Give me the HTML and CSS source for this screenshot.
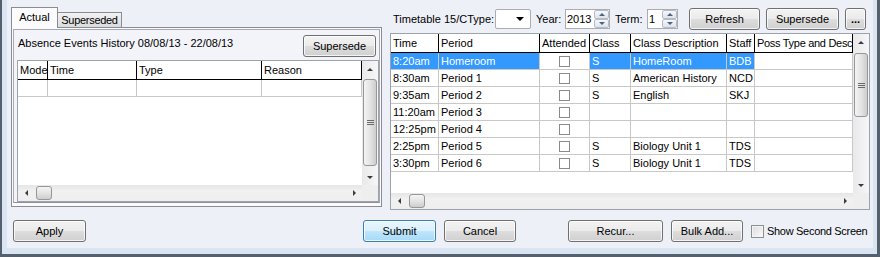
FILE: index.html
```html
<!DOCTYPE html>
<html lang="en">
<head>
    <meta charset="UTF-8">
    <title>Attendance Events</title>
    <link rel="stylesheet" href="styles.css">
</head>
<body>
    <div class="window">
        <div class="client">
            <div class="main">
                <!-- Left: absence history tabs -->
                <div class="tab-control">
                    <div class="tab-strip">
                        <div class="tab tab-active">Actual</div>
                        <div class="tab">Superseded</div>
                    </div>
                    <div class="tab-page">
                        <div class="group">
                            <div class="group-head">
                                <span class="caption">Absence Events History 08/08/13 - 22/08/13</span>
                                <button class="btn btn-small">Supersede</button>
                            </div>
                            <div class="grid grid-absence">
                                <div class="grid-body">
                                    <div class="row head">
                                        <div class="cell">Mode</div>
                                        <div class="cell">Time</div>
                                        <div class="cell">Type</div>
                                        <div class="cell">Reason</div>
                                    </div>
                                    <div class="row">
                                        <div class="cell"></div>
                                        <div class="cell"></div>
                                        <div class="cell"></div>
                                        <div class="cell"></div>
                                    </div>
                                </div>
                                <div class="vscroll">
                                    <div class="sb-arrow"><span class="tri tri-up"></span></div>
                                    <div class="vthumb thumb-absence"><span class="grip"></span></div>
                                    <div class="sb-fill"></div>
                                    <div class="sb-arrow"><span class="tri tri-down"></span></div>
                                </div>
                                <div class="hscroll">
                                    <div class="sb-arrow"><span class="tri tri-left"></span></div>
                                    <div class="hthumb"></div>
                                    <div class="sb-fill"></div>
                                    <div class="sb-arrow"><span class="tri tri-right"></span></div>
                                </div>
                                <div class="corner"></div>
                            </div>
                        </div>
                    </div>
                </div>

                <!-- Right: timetable periods -->
                <div class="timetable">
                    <div class="toolbar">
                        <span class="lbl lbl-timetable">Timetable 15/CType:</span>
                        <div class="combo"><span class="tri tri-down tri-black"></span></div>
                        <span class="lbl lbl-year">Year:</span>
                        <div class="spin spin-year">
                            <span class="spin-text">2013</span>
                            <div class="spin-btns">
                                <div class="spin-btn"><span class="tri tri-up tri-blue"></span></div>
                                <div class="spin-btn"><span class="tri tri-down tri-blue"></span></div>
                            </div>
                        </div>
                        <span class="lbl lbl-term">Term:</span>
                        <div class="spin spin-term">
                            <span class="spin-text">1</span>
                            <div class="spin-btns">
                                <div class="spin-btn"><span class="tri tri-up tri-blue"></span></div>
                                <div class="spin-btn"><span class="tri tri-down tri-blue"></span></div>
                            </div>
                        </div>
                        <button class="btn btn-refresh">Refresh</button>
                        <button class="btn btn-supersede">Supersede</button>
                        <button class="btn btn-more">...</button>
                    </div>

                    <div class="grid grid-periods">
                        <div class="grid-body">
                            <div class="row head">
                                <div class="cell">Time</div>
                                <div class="cell">Period</div>
                                <div class="cell">Attended</div>
                                <div class="cell">Class</div>
                                <div class="cell">Class Description</div>
                                <div class="cell">Staff</div>
                                <div class="cell tight">Poss Type and Desc</div>
                            </div>
                            <div class="row selected">
                                <div class="cell hl">8:20am</div>
                                <div class="cell hl">Homeroom</div>
                                <div class="cell check"><span class="box"></span></div>
                                <div class="cell hl">S</div>
                                <div class="cell hl">HomeRoom</div>
                                <div class="cell hl">BDB</div>
                                <div class="cell"></div>
                            </div>
                            <div class="row">
                                <div class="cell">8:30am</div>
                                <div class="cell">Period 1</div>
                                <div class="cell check"><span class="box"></span></div>
                                <div class="cell">S</div>
                                <div class="cell">American History</div>
                                <div class="cell">NCD</div>
                                <div class="cell"></div>
                            </div>
                            <div class="row">
                                <div class="cell">9:35am</div>
                                <div class="cell">Period 2</div>
                                <div class="cell check"><span class="box"></span></div>
                                <div class="cell">S</div>
                                <div class="cell">English</div>
                                <div class="cell">SKJ</div>
                                <div class="cell"></div>
                            </div>
                            <div class="row">
                                <div class="cell">11:20am</div>
                                <div class="cell">Period 3</div>
                                <div class="cell check"><span class="box"></span></div>
                                <div class="cell"></div>
                                <div class="cell"></div>
                                <div class="cell"></div>
                                <div class="cell"></div>
                            </div>
                            <div class="row">
                                <div class="cell">12:25pm</div>
                                <div class="cell">Period 4</div>
                                <div class="cell check"><span class="box"></span></div>
                                <div class="cell"></div>
                                <div class="cell"></div>
                                <div class="cell"></div>
                                <div class="cell"></div>
                            </div>
                            <div class="row">
                                <div class="cell">2:25pm</div>
                                <div class="cell">Period 5</div>
                                <div class="cell check"><span class="box"></span></div>
                                <div class="cell">S</div>
                                <div class="cell">Biology Unit 1</div>
                                <div class="cell">TDS</div>
                                <div class="cell"></div>
                            </div>
                            <div class="row">
                                <div class="cell">3:30pm</div>
                                <div class="cell">Period 6</div>
                                <div class="cell check"><span class="box"></span></div>
                                <div class="cell">S</div>
                                <div class="cell">Biology Unit 1</div>
                                <div class="cell">TDS</div>
                                <div class="cell"></div>
                            </div>
                        </div>
                        <div class="vscroll">
                            <div class="sb-arrow"><span class="tri tri-up"></span></div>
                            <div class="vthumb thumb-periods"><span class="grip"></span></div>
                            <div class="sb-fill"></div>
                            <div class="sb-arrow"><span class="tri tri-down"></span></div>
                        </div>
                        <div class="hscroll">
                            <div class="sb-arrow"><span class="tri tri-left"></span></div>
                            <div class="hthumb"></div>
                            <div class="sb-fill"></div>
                            <div class="sb-arrow"><span class="tri tri-right"></span></div>
                        </div>
                        <div class="corner"></div>
                    </div>
                </div>
            </div>

            <!-- Bottom buttons -->
            <div class="footer">
                <button class="btn btn-apply">Apply</button>
                <button class="btn btn-default btn-submit">Submit</button>
                <button class="btn btn-cancel">Cancel</button>
                <button class="btn btn-recur">Recur...</button>
                <button class="btn btn-bulk">Bulk Add...</button>
                <span class="checkbox"></span>
                <span class="check-label">Show Second Screen</span>
            </div>
        </div>
    </div>
</body>
</html>
```

FILE: styles.css
```css
/* General page */
body {
    margin: 0;
    padding: 0;
    font-family: "Liberation Sans", Arial, sans-serif;
    font-size: 11px;
    color: #000;
    background: #fff;
}

/* Window frame */
.window {
    width: 880px;
    height: 257px;
    box-sizing: border-box;
    border-left: 2px solid #565f6c;
    border-right: 3px solid #565f6c;
    border-bottom: 3px solid #565f6c;
    padding: 0 4px 6px 5px;
    background: #d9e5f3;
}

.client {
    height: 248px;
    background: #eef0f8;
    display: flex;
    flex-direction: column;
}

.main {
    display: flex;
    gap: 8px;
    padding: 7px 3px 0 4px;
}

/* Tabs */
.tab-control {
    width: 371px;
    display: flex;
    flex-direction: column;
}

.tab-strip {
    display: flex;
    align-items: flex-end;
    height: 20px;
}

.tab {
    box-sizing: border-box;
    height: 15px;
    width: 65px;
    margin-left: -1px;
    border: 1px solid #898c95;
    border-bottom: none;
    background: linear-gradient(#f2f2f2, #dcdcdc);
    text-align: center;
    line-height: 14px;
    letter-spacing: -0.3px;
}

.tab-active {
    position: relative;
    z-index: 1;
    height: 21px;
    width: 47px;
    margin-left: 0;
    margin-bottom: -1px;
    background: #fbfbfd;
    line-height: 19px;
    letter-spacing: 0;
}

.tab-page {
    box-sizing: border-box;
    height: 180px;
    border: 1px solid #898c95;
    background: #fbfbfd;
    padding: 1px 1px 3px 1px;
}

.group {
    box-sizing: border-box;
    height: 100%;
    border: 1px solid #a7a9b0;
    border-bottom-color: #8f9198;
    background: #f3f4fa;
    padding: 0 1px 0 3px;
    display: flex;
    flex-direction: column;
}

.group-head {
    height: 30px;
    display: flex;
    justify-content: space-between;
    align-items: flex-start;
}

.caption {
    padding-left: 1px;
    margin-top: 7px;
}

.btn-small {
    margin-top: 5px;
    margin-right: 2px;
    width: 73px;
}

/* Buttons */
.btn {
    box-sizing: border-box;
    height: 22px;
    padding: 0;
    font-family: inherit;
    font-size: 11px;
    color: #000;
    border: 1px solid #707070;
    border-radius: 3px;
    background: linear-gradient(#f3f3f3 0%, #ebebeb 48%, #dddddd 52%, #d0d0d0 100%);
    box-shadow: inset 0 0 0 1px rgba(255, 255, 255, 0.75);
}

.btn-default {
    border-color: #3c7fb1;
    background: linear-gradient(#eaf6fd 0%, #d9f0fc 48%, #bee6fd 52%, #a7d9f5 100%);
}

/* Grids */
.grid {
    box-sizing: border-box;
    border: 1px solid #9da3ad;
    background: #fff;
    display: grid;
    grid-template-columns: 1fr 16px;
    grid-template-rows: 1fr 16px;
    overflow: hidden;
}

.grid-absence {
    height: 142px;
    width: 362px;
}

.grid-periods {
    height: 177px;
    width: 480px;
}

.grid-body {
    overflow: hidden;
    background: #fff;
}

.row {
    display: grid;
    height: 17px;
    line-height: 16px;
}

.grid-absence .row {
    grid-template-columns: 30px 89px 125px 100px;
}

.grid-periods .row {
    grid-template-columns: 48px 101px 50px 41px 96px 28px 98px;
}

.cell {
    box-sizing: border-box;
    border-right: 1px solid #c8c8c8;
    border-bottom: 1px solid #c8c8c8;
    padding-left: 2px;
    white-space: nowrap;
    overflow: hidden;
}

.row.head {
    height: 19px;
    line-height: 18px;
}

.head .cell {
    border-right-color: #000;
    border-bottom-color: #000;
}

.cell.tight {
    letter-spacing: -0.3px;
}

.cell.hl {
    background: #3399ff;
    color: #fff;
}

.check {
    display: flex;
    align-items: center;
    justify-content: center;
    padding: 0;
}

.box {
    box-sizing: border-box;
    width: 11px;
    height: 11px;
    border: 1px solid #8a8a8a;
    background: #fff;
}

/* Scrollbars */
.vscroll {
    display: flex;
    flex-direction: column;
    background: linear-gradient(to right, #e9e9ec, #f6f6f8);
}

.hscroll {
    display: flex;
    align-items: stretch;
    background: linear-gradient(#e6e6e6, #f1f1f1 40%, #eeeeee);
}

.corner {
    background: #eeeeee;
}

.sb-arrow {
    flex: none;
    width: 16px;
    height: 16px;
    display: flex;
    align-items: center;
    justify-content: center;
}

.sb-fill {
    flex: 1;
}

.vthumb {
    box-sizing: border-box;
    margin: 2px 1px 0;
    border: 1px solid #979797;
    border-radius: 3px;
    background: linear-gradient(to right, #f4f4f4, #e4e4e4 50%, #cdcdcd);
    display: flex;
    align-items: center;
    justify-content: center;
}

.thumb-absence {
    height: 87px;
}

.thumb-periods {
    height: 64px;
    margin-top: 3px;
}

.grip {
    width: 7px;
    height: 5px;
    background: repeating-linear-gradient(#6b6b6b 0 1px, transparent 1px 2px);
}

.hthumb {
    box-sizing: border-box;
    width: 16px;
    margin: 1px 0 1px 2px;
    border: 1px solid #979797;
    border-radius: 3px;
    background: linear-gradient(#f4f4f4, #e4e4e4 50%, #cdcdcd);
}

.tri {
    width: 0;
    height: 0;
}

.tri-up {
    border-left: 3px solid transparent;
    border-right: 3px solid transparent;
    border-bottom: 3px solid #3b3b3b;
}

.tri-down {
    border-left: 3px solid transparent;
    border-right: 3px solid transparent;
    border-top: 3px solid #3b3b3b;
}

.tri-left {
    border-top: 3px solid transparent;
    border-bottom: 3px solid transparent;
    border-right: 3px solid #3b3b3b;
}

.tri-right {
    border-top: 3px solid transparent;
    border-bottom: 3px solid transparent;
    border-left: 3px solid #3b3b3b;
}

.tri-black {
    border-left-width: 4px;
    border-right-width: 4px;
    border-top: 4px solid #000;
}

.tri-blue.tri-up {
    border-bottom-color: #4d6185;
}

.tri-blue.tri-down {
    border-top-color: #4d6185;
}

/* Timetable toolbar */
.timetable {
    display: flex;
    flex-direction: column;
}

.toolbar {
    display: flex;
    align-items: center;
    height: 24px;
    margin-bottom: 2px;
}

.lbl {
    box-sizing: border-box;
    white-space: nowrap;
    overflow: hidden;
}

.lbl-timetable {
    width: 102px;
    margin-left: 3px;
}

.lbl-year {
    width: 29px;
    margin-left: 5px;
}

.lbl-term {
    width: 32px;
    margin-left: 5px;
}

.combo {
    box-sizing: border-box;
    width: 36px;
    height: 20px;
    border: 1px solid #abadb3;
    border-radius: 2px;
    background: #fff;
    display: flex;
    align-items: center;
    justify-content: flex-end;
    padding-right: 6px;
}

.spin {
    box-sizing: border-box;
    height: 20px;
    display: flex;
    border: 1px solid #abadb3;
    background: #fff;
}

.spin-year {
    width: 45px;
}

.spin-term {
    width: 31px;
}

.spin-text {
    flex: 1;
    line-height: 18px;
    padding-left: 1px;
}

.spin-btns {
    width: 15px;
    display: flex;
    flex-direction: column;
}

.spin-btn {
    flex: 1;
    box-sizing: border-box;
    border: 1px solid #b5bcc7;
    border-radius: 2px;
    background: linear-gradient(#f6f8fa, #dde3ea);
    display: flex;
    align-items: center;
    justify-content: center;
}

.btn-refresh {
    width: 71px;
    margin-left: 11px;
}

.btn-supersede {
    width: 73px;
    margin-left: 6px;
}

.btn-more {
    width: 21px;
    margin-left: 6px;
    font-weight: bold;
}

/* Footer */
.footer {
    display: flex;
    align-items: center;
    margin-top: 10px;
    padding-left: 6px;
}

.btn-apply {
    width: 73px;
}

.btn-submit {
    width: 73px;
    margin-left: 277px;
}

.btn-cancel {
    width: 72px;
    margin-left: 8px;
}

.btn-recur {
    width: 95px;
    margin-left: 52px;
}

.btn-bulk {
    width: 72px;
    margin-left: 8px;
}

.checkbox {
    box-sizing: border-box;
    width: 13px;
    height: 13px;
    margin-left: 8px;
    border: 1px solid #8e8f8f;
    background: linear-gradient(135deg, #dcdcdc, #fbfbfb);
    box-shadow: inset 0 0 0 1px #f4f4f4;
}

.check-label {
    margin-left: 3px;
    letter-spacing: -0.3px;
}
```
